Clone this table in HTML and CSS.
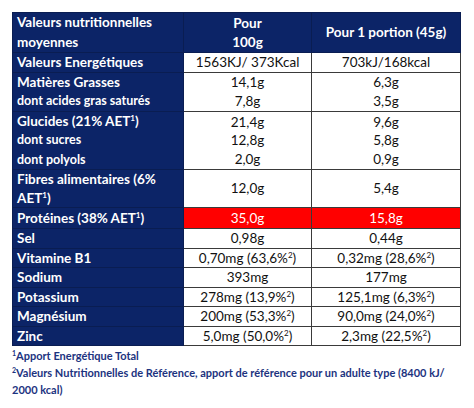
FILE: index.html
```html
<!DOCTYPE html>
<html lang="fr">
<head>
    <meta charset="UTF-8">
    <meta name="viewport" content="width=device-width, initial-scale=1.0">
    <title>Valeurs nutritionnelles</title>
    <link rel="stylesheet" href="styles.css">
</head>
<body>
    <table class="nutrition">
        <tr class="entete">
            <th class="libelle">Valeurs nutritionnelles<br>moyennes</th>
            <th class="col100">Pour<br>100g</th>
            <th class="colportion">Pour 1 portion (45g)</th>
        </tr>
        <tr>
            <th class="libelle">Valeurs Energétiques</th>
            <td>1563KJ/ 373Kcal</td>
            <td>703kJ/168kcal</td>
        </tr>
        <tr>
            <th class="libelle">Matières Grasses<br><span class="sous">dont acides gras saturés</span></th>
            <td>14,1g<br>7,8g</td>
            <td>6,3g<br>3,5g</td>
        </tr>
        <tr>
            <th class="libelle">Glucides (21% AET<sup>1</sup>)<br><span class="sous">dont sucres</span><br><span class="sous">dont polyols</span></th>
            <td>21,4g<br>12,8g<br>2,0g</td>
            <td>9,6g<br>5,8g<br>0,9g</td>
        </tr>
        <tr>
            <th class="libelle">Fibres alimentaires (6%<br>AET<sup>1</sup>)</th>
            <td>12,0g</td>
            <td>5,4g</td>
        </tr>
        <tr class="rouge">
            <th class="libelle">Protéines (38% AET<sup>1</sup>)</th>
            <td>35,0g</td>
            <td>15,8g</td>
        </tr>
        <tr>
            <th class="libelle">Sel</th>
            <td>0,98g</td>
            <td>0,44g</td>
        </tr>
        <tr>
            <th class="libelle">Vitamine B1</th>
            <td>0,70mg (63,6%<sup>2</sup>)</td>
            <td>0,32mg (28,6%<sup>2</sup>)</td>
        </tr>
        <tr>
            <th class="libelle">Sodium</th>
            <td>393mg</td>
            <td>177mg</td>
        </tr>
        <tr>
            <th class="libelle">Potassium</th>
            <td>278mg (13,9%<sup>2</sup>)</td>
            <td>125,1mg (6,3%<sup>2</sup>)</td>
        </tr>
        <tr>
            <th class="libelle">Magnésium</th>
            <td>200mg (53,3%<sup>2</sup>)</td>
            <td>90,0mg (24,0%<sup>2</sup>)</td>
        </tr>
        <tr>
            <th class="libelle">Zinc</th>
            <td>5,0mg (50,0%<sup>2</sup>)</td>
            <td>2,3mg (22,5%<sup>2</sup>)</td>
        </tr>
    </table>
    <div class="notes">
        <p><sup>1</sup>Apport Energétique Total</p>
        <p><sup>2</sup>Valeurs Nutritionnelles de Référence, apport de référence pour un adulte type (8400 kJ/<br>2000 kcal)</p>
    </div>
</body>
</html>
```

FILE: styles.css
```css
body {
    margin: 0;
    padding: 12px;
    background-color: #fff;
    font-family: Lato, "Open Sans", sans-serif;
    font-size: 13.5px;
}
.nutrition {
    border-collapse: collapse;
    width: 449px;
    table-layout: fixed;
}
.nutrition th,
.nutrition td {
    padding: 0 4px;
    line-height: 18.5px;
    border: 1px solid #3a3a3a;
    color: #111;
    font-weight: normal;
    text-align: center;
    vertical-align: middle;
}
.nutrition .libelle {
    width: 162px;
    background-color: #0c2467;
    color: #fff;
    font-weight: bold;
    text-align: left;
    border-color: #0a1d52;
}
.nutrition .col100 {
    width: 119px;
}
.nutrition .libelle .sous {
    font-size: 12.5px;
}
.entete th {
    background-color: #0c2467;
    color: #fff;
    font-weight: bold;
    border-color: #0a1d52;
}
.entete .libelle {
    line-height: 19.5px;
}
.rouge td {
    background-color: #ff0000;
    color: #fff;
}
.rouge th,
.rouge td {
    line-height: 20px;
}
sup {
    font-size: 8px;
    line-height: 0;
    vertical-align: 5px;
}
.notes {
    margin-top: 1px;
    color: #1c3380;
    font-weight: bold;
    font-size: 11px;
    line-height: 17px;
    white-space: nowrap;
}
.notes p {
    margin: 0;
}
.notes sup {
    font-size: 7px;
    vertical-align: 4px;
}
```
